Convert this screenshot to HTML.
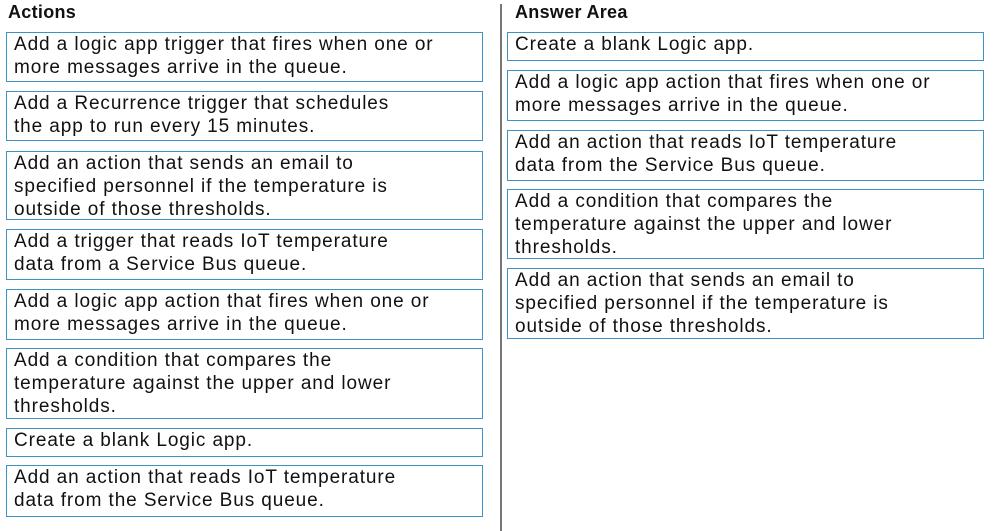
<!DOCTYPE html>
<html><head><style>
body{margin:0;width:1000px;height:531px;background:#fff;position:relative;overflow:hidden;font-family:"Liberation Sans",sans-serif;color:#111}
.h{position:absolute;font-weight:bold;font-size:18px;top:2px;letter-spacing:0.3px}
.b{position:absolute;border:1.5px solid #3f93c4;box-sizing:border-box;font-size:19px;line-height:23px;padding:0 0 0 7px;white-space:nowrap;letter-spacing:0.9px}
.l{left:6px;width:477px}
.r{left:507px;width:477px}
.div{position:absolute;left:500px;top:4px;width:1.5px;height:527px;background:#777}
</style></head><body>
<div class="h" style="left:8px">Actions</div>
<div class="h" style="left:515px">Answer Area</div>
<div class="div"></div>
<div class="b l" style="top:32px;height:50px">Add a logic app trigger that fires when one or<br>more messages arrive in the queue.</div>
<div class="b l" style="top:91px;height:50px">Add a Recurrence trigger that schedules<br>the app to run every 15 minutes.</div>
<div class="b l" style="top:151px;height:69px">Add an action that sends an email to<br>specified personnel if the temperature is<br>outside of those thresholds.</div>
<div class="b l" style="top:229px;height:51px">Add a trigger that reads IoT temperature<br>data from a Service Bus queue.</div>
<div class="b l" style="top:289px;height:51px">Add a logic app action that fires when one or<br>more messages arrive in the queue.</div>
<div class="b l" style="top:348px;height:71px">Add a condition that compares the<br>temperature against the upper and lower<br>thresholds.</div>
<div class="b l" style="top:428px;height:29px">Create a blank Logic app.</div>
<div class="b l" style="top:465px;height:52px">Add an action that reads IoT temperature<br>data from the Service Bus queue.</div>
<div class="b r" style="top:32px;height:29px">Create a blank Logic app.</div>
<div class="b r" style="top:70px;height:51px">Add a logic app action that fires when one or<br>more messages arrive in the queue.</div>
<div class="b r" style="top:130px;height:51px">Add an action that reads IoT temperature<br>data from the Service Bus queue.</div>
<div class="b r" style="top:189px;height:70px">Add a condition that compares the<br>temperature against the upper and lower<br>thresholds.</div>
<div class="b r" style="top:268px;height:71px">Add an action that sends an email to<br>specified personnel if the temperature is<br>outside of those thresholds.</div>
</body></html>
